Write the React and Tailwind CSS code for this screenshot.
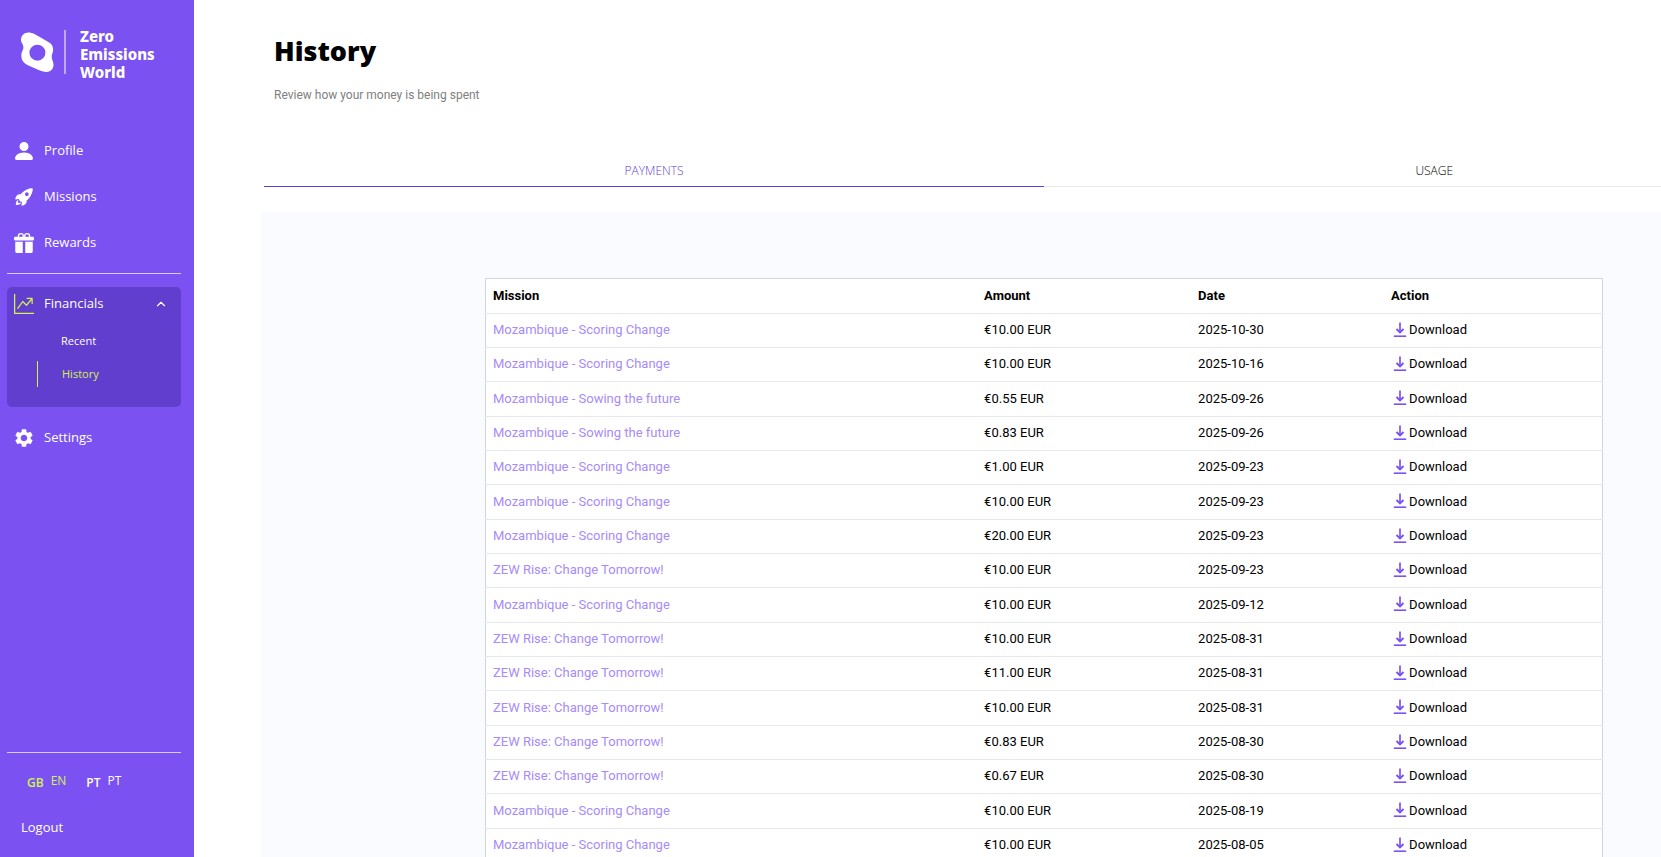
import { BsPersonFill, BsGiftFill, BsGraphUpArrow } from "react-icons/bs";
import { IoRocketSharp } from "react-icons/io5";
import { MdSettings } from "react-icons/md";
import { ChevronUp } from "lucide-react";

const SCORING = "Mozambique - Scoring Change";
const SOWING = "Mozambique - Sowing the future";
const RISE = "ZEW Rise: Change Tomorrow!";

const payments = [
  { mission: SCORING, amount: "10.00", date: "2025-10-30" },
  { mission: SCORING, amount: "10.00", date: "2025-10-16" },
  { mission: SOWING, amount: "0.55", date: "2025-09-26" },
  { mission: SOWING, amount: "0.83", date: "2025-09-26" },
  { mission: SCORING, amount: "1.00", date: "2025-09-23" },
  { mission: SCORING, amount: "10.00", date: "2025-09-23" },
  { mission: SCORING, amount: "20.00", date: "2025-09-23" },
  { mission: RISE, amount: "10.00", date: "2025-09-23" },
  { mission: SCORING, amount: "10.00", date: "2025-09-12" },
  { mission: RISE, amount: "10.00", date: "2025-08-31" },
  { mission: RISE, amount: "11.00", date: "2025-08-31" },
  { mission: RISE, amount: "10.00", date: "2025-08-31" },
  { mission: RISE, amount: "0.83", date: "2025-08-30" },
  { mission: RISE, amount: "0.67", date: "2025-08-30" },
  { mission: SCORING, amount: "10.00", date: "2025-08-19" },
  { mission: SCORING, amount: "10.00", date: "2025-08-05" },
];

function Logo() {
  return (
    <a href="#home" className="flex items-start pl-5 pt-[27px]">
      <svg width="34" height="42" viewBox="0 0 34 42" className="mt-1" aria-hidden="true">
        <path
          fill="#fff"
          fillRule="evenodd"
          d="M8.5 1.5C4 1.5 1 4.7 1 9c0 3 2.6 4.500 2.400 7.500C3.200 19.500 1.300 20.500 1.300 25c0 4 2.200 7 6 9l12.500 5.500c3 1.200 5.700 1.800 8 1.300 3.600-.700 5.700-3.300 5.700-7 0-3.600-1.900-5-1.800-8 .100-3.200 1.400-3.800 1.400-7.300 0-3.400-1.800-5.900-4.700-7.500L14.500 3C12.300 2 10.500 1.500 8.500 1.500ZM17.400 13.700a8 8 0 1 1 0 16 8 8 0 0 1 0-16Z"
        />
      </svg>
      <span className="ml-[10px] mt-[3px] h-11 w-[2px] bg-white/50" />
      <span className="ml-[14px] font-['Noto_Sans',sans-serif] text-[15px] font-extrabold leading-[18px] text-white">
        Zero
        <br />
        Emissions
        <br />
        World
      </span>
    </a>
  );
}

function NavItem({ icon: Icon, label, size = 20 }) {
  return (
    <a href={`#${label.toLowerCase()}`} className="flex h-[46px] items-center">
      <span className="flex w-12 justify-center">
        <Icon size={size} />
      </span>
      <span className="-ml-1">{label}</span>
    </a>
  );
}

function Sidebar() {
  return (
    <aside className="flex h-full w-[194px] shrink-0 flex-col bg-[#7b52f1] font-['Open_Sans',sans-serif] text-[13px] text-white">
      <Logo />

      <nav className="mt-[47px] flex flex-col">
        <NavItem icon={BsPersonFill} label="Profile" size={24} />
        <NavItem icon={IoRocketSharp} label="Missions" />
        <NavItem icon={BsGiftFill} label="Rewards" />
        <hr className="ml-[7px] mr-[13px] mt-[7px] border-[#d8cbfb]" />

        {/* Financials group */}
        <div className="ml-[7px] mr-[13px] mt-[13px] h-[120px] rounded-[5px] bg-[#613ecd]">
          <button type="button" className="flex h-[34px] w-full items-center">
            <span className="flex w-[34px] justify-center text-[#d1f24f]">
              <BsGraphUpArrow size={20} />
            </span>
            <span className="ml-[3px]">Financials</span>
            <ChevronUp size={14} className="ml-auto mr-[13px]" />
          </button>
          <div className="flex flex-col pl-[30px] text-[11px]">
            <a href="#recent" className="mt-[7px] flex h-[26px] items-center pl-6">
              Recent
            </a>
            <a
              href="#history"
              className="mt-[7px] flex h-[26px] items-center border-l border-[#d1f24f] pl-6 text-[#d1f24f]"
            >
              History
            </a>
          </div>
        </div>

        <div className="mt-2">
          <NavItem icon={MdSettings} label="Settings" size={22} />
        </div>
      </nav>

      <div className="mt-auto">
        <hr className="ml-[7px] mr-[13px] border-[#d8cbfb]" />
        <div className="flex pl-[27px] pt-[18px]">
          <button type="button" className="flex gap-[7px] text-[#d1f24f]">
            <span className="pt-[2px] text-[12px] font-semibold leading-[20px]">GB</span>
            <span className="text-[12px] leading-[20px]">EN</span>
          </button>
          <button type="button" className="ml-5 flex gap-[7px]">
            <span className="pt-[2px] text-[12px] font-semibold leading-[20px]">PT</span>
            <span className="text-[12px] leading-[20px]">PT</span>
          </button>
        </div>
        <button type="button" className="mb-5 ml-[21px] mt-[24px] block leading-[20px]">
          Logout
        </button>
      </div>
    </aside>
  );
}

function DownloadIcon() {
  return (
    <svg width="14" height="16" viewBox="0 0 14 16" fill="none" stroke="#7b52f1" aria-hidden="true">
      <path d="M7 0.500v10" strokeWidth="1.700" />
      <path d="M3.500 7 7 10.500 10.500 7" strokeWidth="1.900" />
      <path d="M0.800 14.200h12.400" strokeWidth="1.600" />
    </svg>
  );
}

function PaymentsTable() {
  return (
    <table className="w-full table-fixed border-collapse border border-[#d1d5db] bg-white text-left text-[13px] leading-[19px]">
      <thead>
        <tr className="h-[35px] border-b border-[#e5e7eb] font-bold">
          <th className="w-[44%] px-[7px] pb-2 pt-[6px]">Mission</th>
          <th className="w-[214px] px-[7px] pb-2 pt-[6px]">Amount</th>
          <th className="w-[193px] px-[7px] pb-2 pt-[6px]">Date</th>
          <th className="px-[7px] pb-2 pt-[6px]">Action</th>
        </tr>
      </thead>
      <tbody>
        {payments.map((payment, index) => (
          <tr key={index} className="border-b border-[#e5e7eb] nth-[3n]:h-[35px]">
            <td className="px-[7px] pb-2 pt-[6px]">
              <a href="#mission" className="text-[#a78bfa]">
                {payment.mission}
              </a>
            </td>
            <td className="px-[7px] pb-2 pt-[6px]">€{payment.amount} EUR</td>
            <td className="px-[7px] pb-2 pt-[6px]">{payment.date}</td>
            <td className="px-[7px] pb-2 pt-[6px]">
              <button type="button" className="ml-[2px] flex items-center gap-[2px]">
                <DownloadIcon />
                Download
              </button>
            </td>
          </tr>
        ))}
      </tbody>
    </table>
  );
}

export default function App() {
  return (
    <div className="flex h-screen overflow-hidden bg-white font-['Roboto',sans-serif] text-black">
      <Sidebar />

      <main className="flex-1 overflow-hidden pl-[67px]">
        <header className="pl-[13px] pt-[31px]">
          <h1 className="font-['Noto_Sans',sans-serif] text-[27px] font-black leading-[40px]">
            History
          </h1>
          <p className="mt-[14px] text-[12px] leading-[20px] text-[#808080]">
            Review how your money is being spent
          </p>
        </header>

        {/* The tab strip runs wider than the window */}
        <div className="w-[calc(94vw+5px)]">
          <div
            role="tablist"
            className="ml-[3px] mr-[3px] mt-[49px] flex font-['Open_Sans',sans-serif] text-[12px] font-light leading-[20px]"
          >
            <button
              type="button"
              role="tab"
              aria-selected="true"
              className="h-[33px] flex-1 border-b border-[#613ecd] pt-[2px] text-[#613ecd]"
            >
              PAYMENTS
            </button>
            <button
              type="button"
              role="tab"
              aria-selected="false"
              className="h-[33px] flex-1 border-b border-[#e5e7eb] pt-[2px]"
            >
              USAGE
            </button>
          </div>

          <section className="mt-[25px] bg-[#fafbff] px-56 py-[66px]">
            <PaymentsTable />
          </section>
        </div>
      </main>
    </div>
  );
}
